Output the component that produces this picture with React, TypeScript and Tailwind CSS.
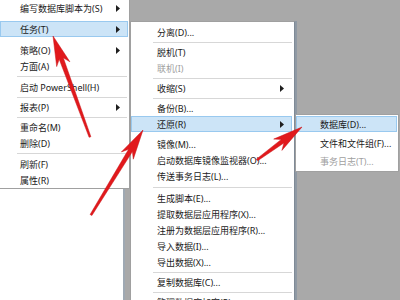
type Entry = {
  label?: string;
  sub?: boolean;
  disabled?: boolean;
  active?: boolean;
  h?: number;
  gap?: number;
  sep?: number;
};

type Pt = [number, number];

const menuTasksParent: Entry[] = [
  { label: "编写数据库脚本为(S)", sub: true, h: 17 },
  { gap: 4 },
  { label: "任务(T)", sub: true, active: true },
  { gap: 5 },
  { label: "策略(O)", sub: true },
  { label: "方面(A)" },
  { sep: 5 },
  { label: "启动 PowerShell(H)" },
  { sep: 4 },
  { label: "报表(P)", sub: true },
  { sep: 4 },
  { label: "重命名(M)" },
  { label: "删除(D)" },
  { sep: 5 },
  { label: "刷新(F)" },
  { label: "属性(R)" },
];

const menuTasks: Entry[] = [
  { label: "分离(D)..." },
  { sep: 4 },
  { label: "脱机(T)" },
  { label: "联机(I)", disabled: true },
  { sep: 4 },
  { label: "收缩(S)", sub: true },
  { sep: 4 },
  { label: "备份(B)..." },
  { label: "还原(R)", sub: true, active: true },
  { gap: 4 },
  { label: "镜像(M)..." },
  { label: "启动数据库镜像监视器(O)..." },
  { label: "传送事务日志(L)..." },
  { sep: 6 },
  { label: "生成脚本(E)..." },
  { label: "提取数据层应用程序(X)..." },
  { label: "注册为数据层应用程序(R)..." },
  { label: "导入数据(I)..." },
  { label: "导出数据(X)..." },
  { sep: 4 },
  { label: "复制数据库(C)..." },
  { sep: 4 },
  { label: "管理数据库加密(P)..." },
];

const menuRestore: Entry[] = [
  { label: "数据库(D)...", active: true },
  { gap: 2 },
  { label: "文件和文件组(F)...", h: 18 },
  { label: "事务日志(T)...", disabled: true, h: 18 },
];

function SubArrow() {
  return (
    <svg width="4" height="7" viewBox="0 0 4 7" className="shrink-0">
      <polygon points="0,0 4,3.5 0,7" fill="#1e1e1e" />
    </svg>
  );
}

function Menu({
  entries,
  rowClass,
  sepClass,
}: {
  entries: Entry[];
  rowClass: string;
  sepClass: string;
}) {
  return (
    <>
      {entries.map((e, i) => {
        if (e.gap) return <div key={i} style={{ height: e.gap }} />;
        if (e.sep)
          return (
            <div key={i} className="flex items-center" style={{ height: e.sep }}>
              <div className={`h-px flex-1 bg-[#d7d7d7] ${sepClass}`} />
            </div>
          );
        return (
          <div
            key={i}
            style={{ height: e.h ?? 16 }}
            className={`flex items-center justify-between border ${rowClass} ${
              e.active ? "border-[#99c9ef] bg-[#cce4f7]" : "border-transparent"
            } ${e.disabled ? "text-[#a0a0a0]" : "text-[#1a1a1a]"}`}
          >
            <span className="whitespace-nowrap">{e.label}</span>
            {e.sub && <SubArrow />}
          </div>
        );
      })}
    </>
  );
}

function arrowPoints(tail: Pt, tip: Pt) {
  const headLen = 30;
  const headHalf = 7;
  const dx = tip[0] - tail[0];
  const dy = tip[1] - tail[1];
  const len = Math.hypot(dx, dy);
  const ux = dx / len;
  const uy = dy / len;
  const px = -uy;
  const py = ux;
  const base: Pt = [tip[0] - ux * headLen, tip[1] - uy * headLen];
  const notch: Pt = [tip[0] - ux * headLen * 0.8, tip[1] - uy * headLen * 0.8];
  const pts: Pt[] = [
    [tail[0] + px * 1, tail[1] + py * 1],
    [notch[0] + px * 2.2, notch[1] + py * 2.2],
    [base[0] + px * headHalf, base[1] + py * headHalf],
    tip,
    [base[0] - px * headHalf, base[1] - py * headHalf],
    [notch[0] - px * 2.2, notch[1] - py * 2.2],
    [tail[0] - px * 1, tail[1] - py * 1],
  ];
  return pts.map((p) => `${p[0].toFixed(1)},${p[1].toFixed(1)}`).join(" ");
}

const arrows: [Pt, Pt][] = [
  [[90, 137], [53, 36]],
  [[91, 215], [143, 130]],
  [[257, 160], [302, 127]],
];

export default function App() {
  return (
    <div className="relative flex h-[300px] w-[400px] items-start overflow-hidden bg-[#a9a9a9] font-['Noto_Sans','Noto_Sans_CJK_SC',sans-serif] text-[9px] leading-none">
      {/* parent context menu + tree area underneath */}
      <div className="flex h-full w-[130px] shrink-0 flex-col">
        <div className="border-r border-b border-[#a0a0a0] bg-white">
          <Menu
            entries={menuTasksParent}
            rowClass="mr-[1px] pl-[19px] pr-[7px]"
            sepClass="ml-[17px] mr-[2px]"
          />
        </div>
        <div className="w-[125px] flex-1 border-r-2 border-[#9fa9b3] bg-white" />
      </div>

      {/* 任务 submenu */}
      <div className="mt-[21px] w-[165px] shrink-0 border border-[#a0a0a0] border-r-[#7f8a96] bg-white pt-[2px] shadow-[2px_0_0_#8f99a4]">
        <Menu
          entries={menuTasks}
          rowClass="mr-[2px] pl-[25px] pr-[7px]"
          sepClass="ml-[22px] mr-[2px]"
        />
      </div>

      {/* 还原 submenu */}
      <div className="mt-[114px] w-[104px] shrink-0 border border-[#a0a0a0] bg-white py-[1px]">
        <Menu
          entries={menuRestore}
          rowClass="mr-[1px] pl-[23px] pr-[4px]"
          sepClass="ml-[20px]"
        />
      </div>

      {/* red annotation arrows */}
      <svg
        className="pointer-events-none absolute inset-0"
        width="400"
        height="300"
        viewBox="0 0 400 300"
      >
        {arrows.map(([tail, tip], i) => (
          <polygon
            key={i}
            points={arrowPoints(tail, tip)}
            fill="#e1191c"
            stroke="#c91216"
            strokeWidth="0.5"
            strokeLinejoin="round"
          />
        ))}
      </svg>
    </div>
  );
}
